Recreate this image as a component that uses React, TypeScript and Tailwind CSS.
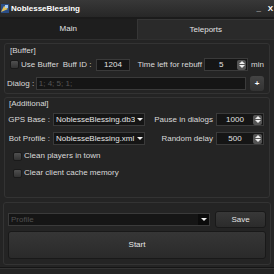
import React from "react";

const font = { fontFamily: '"Liberation Sans", "DejaVu Sans", sans-serif' };

function Box({ w, label }: { w: string; label: string }) {
  return (
    <span className={`flex items-center gap-[2px] ${w}`}>
      <span className="h-[9px] w-[9px] shrink-0 rounded-[2px] border border-[#1a1a1a] bg-gradient-to-b from-[#505050] to-[#333]" />
      <span className="whitespace-nowrap">{label}</span>
    </span>
  );
}

function Spin({ value, w }: { value: string; w: string }) {
  return (
    <div className={`flex h-[13px] shrink-0 items-center border border-[#3a3a3a] bg-[#151515] ${w}`}>
      <span className="flex-1 text-center text-[#e4e4e4]">{value}</span>
      <span className="mr-[1px] flex h-[10px] w-[9px] flex-col items-center justify-center gap-[1px] rounded-[2px] bg-[#555]">
        <span className="h-0 w-0 border-x-[3px] border-b-[3px] border-x-transparent border-b-[#eee]" />
        <span className="h-0 w-0 border-x-[3px] border-t-[3px] border-x-transparent border-t-[#eee]" />
      </span>
    </div>
  );
}

function Combo({ value, w }: { value: string; w: string }) {
  return (
    <div className={`flex h-[13px] shrink-0 items-center border border-[#3a3a3a] bg-[#151515] ${w}`}>
      <span className="flex-1 overflow-hidden whitespace-nowrap pl-[2px] text-[#e4e4e4]">{value}</span>
      <span className="flex h-full w-[9px] items-center justify-center">
        <span className="h-0 w-0 border-x-[3px] border-t-[3px] border-x-transparent border-t-[#eee]" />
      </span>
    </div>
  );
}

function Label({ text }: { text: string }) {
  return (
    <span className="flex w-[40px] shrink-0 justify-end">
      <span className="whitespace-nowrap">{text}</span>
    </span>
  );
}

export default function App() {
  return (
    <div
      className="flex h-[274px] w-[274px] flex-col bg-[#242424] text-[8px] leading-[10px] text-[#dadada]"
      style={font}
    >
      <div className="flex h-[17px] shrink-0 items-center bg-gradient-to-b from-[#383838] to-[#272727] pl-[1px] pr-[1px]">
        <svg width="8" height="9" viewBox="0 0 8 9">
          <rect width="8" height="9" fill="#2a4d86" />
          <path d="M0 8 L3 2 L7 5 Z" fill="#e2c25a" />
          <rect x="4" y="1" width="3" height="3" fill="#a8cdf2" />
        </svg>
        <span className="ml-[2px] whitespace-nowrap text-[8px] font-bold text-white">NoblesseBlessing</span>
        <span className="ml-auto whitespace-nowrap text-[8px] font-bold text-white">_&nbsp;&nbsp;&nbsp;X</span>
      </div>
      <div className="flex h-[23px] shrink-0 border-b border-[#2f2f2f] bg-[#1b1b1b] pt-[2px]">
        <div className="flex flex-1 items-center justify-center bg-[#1e1e1e] text-[#e2e2e2]">Main</div>
        <div className="flex flex-1 items-center justify-center border-l border-t border-[#363636] bg-[#2a2a2a] text-[#e2e2e2]">
          Teleports
        </div>
      </div>

      <div className="mx-[4px] mt-[3px] flex h-[51px] shrink-0 flex-col rounded-[3px] border border-[#333] px-[5px] pt-[2px]">
        <span>[Buffer]</span>
        <div className="mt-[2px] flex items-center">
          <Box w="w-[53px]" label="Use Buffer" />
          <span className="w-[33px] whitespace-nowrap">Buff ID :</span>
          <div className="flex h-[12px] w-[35px] items-center justify-center border border-[#3a3a3a] bg-[#151515] text-[#e4e4e4]">
            1204
          </div>
          <span className="ml-[7px] w-[67px] whitespace-nowrap">Time left for rebuff</span>
          <Spin value="5" w="w-[44px]" />
          <span className="ml-[3px]">min</span>
        </div>
        <div className="mt-[5px] -ml-[3px] flex items-center">
          <span className="w-[29px] whitespace-nowrap">Dialog :</span>
          <div className="flex h-[13px] w-[212px] items-center border border-[#3a3a3a] bg-[#151515] pl-[2px] text-[#555]">
            1; 4; 5; 1;
          </div>
          <span className="ml-[4px] flex h-[15px] w-[14px] items-center justify-center rounded-[3px] bg-gradient-to-b from-[#444] to-[#333] font-bold text-white">
            +
          </span>
        </div>
      </div>

      <div className="mx-[4px] mt-[3px] flex h-[101px] shrink-0 flex-col rounded-[3px] border border-[#333] px-[5px] pt-[1px]">
        <span className="-ml-[1px]">[Additional]</span>
        <div className="mt-[4px] flex items-center">
          <Label text="GPS Base :" />
          <Combo value="NoblesseBlessing.db3" w="ml-[3px] w-[92px]" />
          <span className="w-[71px] whitespace-nowrap text-right">Pause in dialogs</span>
          <Spin value="1000" w="ml-[3px] w-[48px]" />
        </div>
        <div className="mt-[6px] flex items-center">
          <Label text="Bot Profile :" />
          <Combo value="NoblesseBlessing.xml" w="ml-[3px] w-[92px]" />
          <span className="w-[71px] whitespace-nowrap text-right">Random delay</span>
          <Spin value="500" w="ml-[3px] w-[48px]" />
        </div>
        <div className="mt-[6px] flex flex-col gap-[7px] pl-[3px]">
          <Box w="" label="Clean players in town" />
          <Box w="" label="Clear client cache memory" />
        </div>
      </div>

      <div className="mx-[3px] mt-[4px] flex h-[63px] shrink-0 flex-col rounded-[3px] border border-[#333] px-[4px] pt-[8px]">
        <div className="flex items-center">
          <div className="flex h-[13px] w-[202px] items-center border border-[#3a3a3a] bg-[#151515] pl-[2px]">
            <span className="flex-1 text-[#505050]">Profile</span>
            <span className="flex h-full w-[11px] items-center justify-center bg-[#0b0b0b]">
              <span className="h-0 w-0 border-x-[3px] border-t-[3px] border-x-transparent border-t-[#eee]" />
            </span>
          </div>
          <div className="ml-[5px] flex h-[17px] w-[51px] items-center justify-center rounded-[3px] border border-[#191919] bg-gradient-to-b from-[#383838] to-[#2b2b2b] text-[#e2e2e2]">
            Save
          </div>
        </div>
        <div className="mt-[3px] flex h-[28px] w-[258px] items-center justify-center rounded-[3px] border border-[#191919] bg-gradient-to-b from-[#363636] to-[#2a2a2a] text-[#e8e8e8]">
          Start
        </div>
      </div>
      <div className="mt-[2px] h-[1px] shrink-0 bg-[#151515]" />
      <div className="h-[1px] shrink-0 bg-[#333]" />
    </div>
  );
}
